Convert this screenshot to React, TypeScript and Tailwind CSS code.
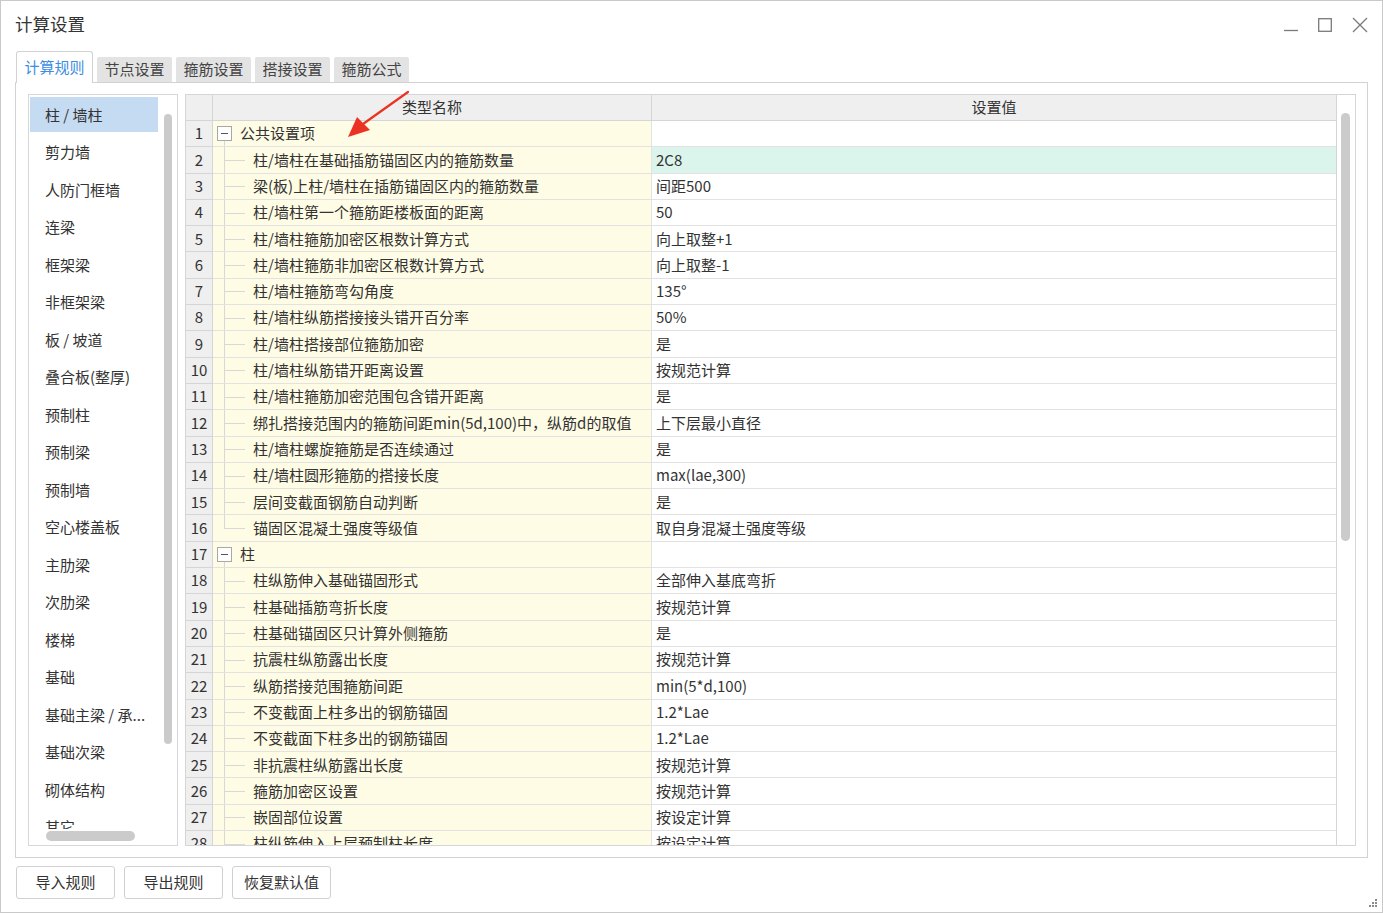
import React from 'react';

const leftItems = [
  '柱 / 墙柱', '剪力墙', '人防门框墙', '连梁', '框架梁', '非框架梁', '板 / 坡道', '叠合板(整厚)',
  '预制柱', '预制梁', '预制墙', '空心楼盖板', '主肋梁', '次肋梁', '楼梯', '基础',
  '基础主梁 / 承...', '基础次梁', '砌体结构', '其它',
];

type Row = { name: string; value?: string; group?: boolean; last?: boolean };

const rows: Row[] = [
  { name: '公共设置项', group: true },
  { name: '柱/墙柱在基础插筋锚固区内的箍筋数量', value: '2C8' },
  { name: '梁(板)上柱/墙柱在插筋锚固区内的箍筋数量', value: '间距500' },
  { name: '柱/墙柱第一个箍筋距楼板面的距离', value: '50' },
  { name: '柱/墙柱箍筋加密区根数计算方式', value: '向上取整+1' },
  { name: '柱/墙柱箍筋非加密区根数计算方式', value: '向上取整-1' },
  { name: '柱/墙柱箍筋弯勾角度', value: '135°' },
  { name: '柱/墙柱纵筋搭接接头错开百分率', value: '50%' },
  { name: '柱/墙柱搭接部位箍筋加密', value: '是' },
  { name: '柱/墙柱纵筋错开距离设置', value: '按规范计算' },
  { name: '柱/墙柱箍筋加密范围包含错开距离', value: '是' },
  { name: '绑扎搭接范围内的箍筋间距min(5d,100)中，纵筋d的取值', value: '上下层最小直径' },
  { name: '柱/墙柱螺旋箍筋是否连续通过', value: '是' },
  { name: '柱/墙柱圆形箍筋的搭接长度', value: 'max(lae,300)' },
  { name: '层间变截面钢筋自动判断', value: '是' },
  { name: '锚固区混凝土强度等级值', value: '取自身混凝土强度等级', last: true },
  { name: '柱', group: true },
  { name: '柱纵筋伸入基础锚固形式', value: '全部伸入基底弯折' },
  { name: '柱基础插筋弯折长度', value: '按规范计算' },
  { name: '柱基础锚固区只计算外侧箍筋', value: '是' },
  { name: '抗震柱纵筋露出长度', value: '按规范计算' },
  { name: '纵筋搭接范围箍筋间距', value: 'min(5*d,100)' },
  { name: '不变截面上柱多出的钢筋锚固', value: '1.2*Lae' },
  { name: '不变截面下柱多出的钢筋锚固', value: '1.2*Lae' },
  { name: '非抗震柱纵筋露出长度', value: '按规范计算' },
  { name: '箍筋加密区设置', value: '按规范计算' },
  { name: '嵌固部位设置', value: '按设定计算' },
  { name: '柱纵筋伸入上层预制柱长度', value: '按设定计算' },
];

const tabs = ['节点设置', '箍筋设置', '搭接设置', '箍筋公式'];

function TreeCell({ row }: { row: Row }) {
  if (row.group) {
    return (
      <div className="relative h-full flex items-center">
        <div className="absolute left-[3px] top-[5px] w-[15px] h-[15px] border border-[#a8a8a8] bg-white flex items-center justify-center">
          <div className="w-[7px] h-px bg-[#555]" />
        </div>
        <div className="absolute left-[10px] top-[20px] bottom-0 w-px bg-[#d8d8d8]" />
        <span className="pl-[26px]">{row.name}</span>
      </div>
    );
  }
  return (
    <div className="relative h-full flex items-center">
      <div className={`absolute left-[10px] top-0 w-px bg-[#d8d8d8] ${row.last ? 'h-1/2' : 'bottom-0'}`} />
      <div className="absolute left-[10px] top-1/2 w-[21px] h-px bg-[#d8d8d8]" />
      <span className="pl-[39px] whitespace-nowrap">{row.name}</span>
    </div>
  );
}

export default function App() {
  return (
    <div
      className="relative w-[1383px] h-[913px] bg-white border border-[#c9c9c9] text-[#333] text-[15px] overflow-hidden"
      style={{ fontFamily: '"Noto Sans CJK SC", "Noto Sans", sans-serif' }}
    >
      {/* Title bar */}
      <div className="h-[49px] flex items-center justify-between pl-[14px] pr-[14px]">
        <span className="text-[17.5px] text-[#333] -mt-[3px]">计算设置</span>
        <div className="flex items-center gap-[20px] -mt-[2px] text-[#7a7a7a]">
          <svg width="14" height="14" viewBox="0 0 14 14"><path d="M0 12.5 H14" stroke="#7a7a7a" strokeWidth="1.3" /></svg>
          <svg width="14" height="14" viewBox="0 0 14 14"><rect x="0.7" y="0.7" width="12.6" height="12.6" fill="none" stroke="#7a7a7a" strokeWidth="1.3" /></svg>
          <svg width="16" height="16" viewBox="0 0 16 16"><path d="M1 1 L15 15 M15 1 L1 15" stroke="#7a7a7a" strokeWidth="1.3" /></svg>
        </div>
      </div>

      {/* Tabs */}
      <div className="flex items-end pl-[15px] h-[32px] gap-[4px]">
        <div className="relative z-10 h-[32px] w-[77px] border border-b-0 border-[#d2d2d2] rounded-t-[3px] bg-white flex items-center justify-center text-[#3b8ee3] -mb-px">
          计算规则
        </div>
        {tabs.map((t) => (
          <div key={t} className="h-[25px] w-[75px] bg-[#e3e3e3] rounded-t-[2px] flex items-center justify-center text-[#444]">
            {t}
          </div>
        ))}
      </div>

      {/* Panel */}
      <div className="ml-[14px] w-[1353px] h-[776px] border border-[#d2d2d2] flex gap-[7px] pl-[12px] pr-[11px] pt-[11px] pb-[11px]">
        {/* Left list */}
        <div className="relative w-[150px] h-[752px] border border-[#d8d8d8] overflow-hidden">
          <div className="pt-px pl-px">
            {leftItems.map((it, i) => (
              <div key={it} className="h-[37.5px] flex items-center">
                <div className={`w-[128px] h-[35px] flex items-center pl-[15px] whitespace-pre ${i === 0 ? 'bg-[#c4dbf2]' : ''}`}>
                  {it}
                </div>
              </div>
            ))}
          </div>
          <div className="absolute left-[135px] top-[19px] w-[8px] h-[630px] rounded-full bg-[#cbcbcb]" />
          <div className="absolute left-0 right-0 bottom-0 h-[16px] bg-white" />
          <div className="absolute left-[17px] bottom-[4px] w-[89px] h-[10px] rounded-full bg-[#cbcbcb]" />
        </div>

        {/* Table */}
        <div className="w-[1171px] h-[752px] border border-[#d5d5d5] flex">
          <div className="flex-1 overflow-hidden">
            <div className="grid grid-cols-[27px_439px_1fr] h-[26px] bg-[#efefef] border-b border-[#d5d5d5]">
              <div className="border-r border-[#d5d5d5]" />
              <div className="border-r border-[#d5d5d5] flex items-center justify-center">类型名称</div>
              <div className="flex items-center justify-center">设置值</div>
            </div>
            {rows.map((r, i) => (
              <div key={i} className="grid grid-cols-[27px_439px_1fr] h-[26.3px]">
                <div className="bg-[#efefef] border-r border-b border-[#d5d5d5] flex items-center justify-center">
                  {i + 1}
                </div>
                <div className="bg-[#fffce5] border-r border-b border-[#e2e2e2] pl-[1px]">
                  <TreeCell row={r} />
                </div>
                <div className={`border-b border-[#e2e2e2] flex items-center pl-[4px] whitespace-nowrap ${i === 1 ? 'bg-[#dcf5ec]' : 'bg-white'}`}>
                  {r.value}
                </div>
              </div>
            ))}
          </div>
          <div className="w-[19px] border-l border-[#d5d5d5] bg-white relative">
            <div className="absolute left-[4px] top-[18px] w-[9px] h-[428px] rounded-full bg-[#cbcbcb]" />
          </div>
        </div>
      </div>

      {/* Bottom buttons */}
      <div className="flex gap-[9px] pl-[15px] mt-[8px]">
        {['导入规则', '导出规则', '恢复默认值'].map((b) => (
          <div key={b} className="w-[99px] h-[33px] border border-[#d0d0d0] rounded-[3px] bg-white flex items-center justify-center text-[#333]">
            {b}
          </div>
        ))}
      </div>

      {/* Resize grip */}
      <svg className="absolute right-[4px] bottom-[4px]" width="10" height="10" viewBox="0 0 10 10">
        {[[8, 2], [8, 5], [5, 5], [8, 8], [5, 8], [2, 8]].map(([x, y], i) => (
          <rect key={i} x={x - 1} y={y - 1} width="2" height="2" fill="#8a8a8a" />
        ))}
      </svg>

      {/* Red annotation arrow */}
      <svg className="absolute left-[340px] top-[86px]" width="76" height="56" viewBox="0 0 76 56">
        <path d="M67 5 L22 37" stroke="#ea3323" strokeWidth="2.2" strokeLinecap="round" />
        <path d="M7 50 L16 30 L29 43 Z" fill="#ea3323" />
      </svg>
    </div>
  );
}
